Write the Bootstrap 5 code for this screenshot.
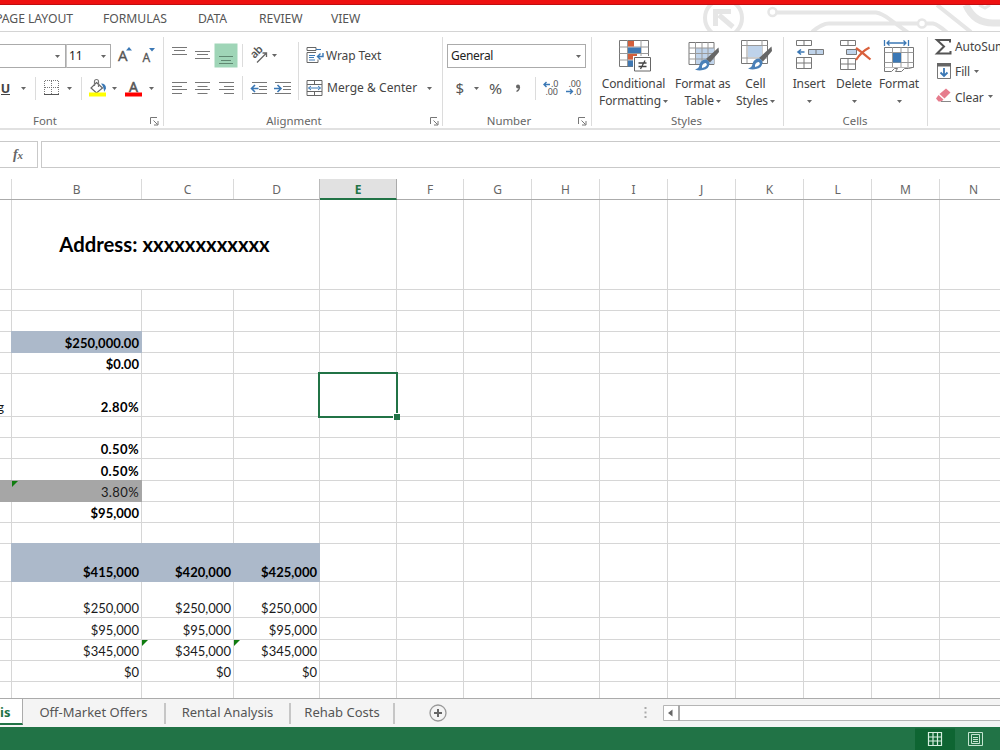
<!DOCTYPE html>
<html lang="en">
<head>
<meta charset="utf-8">
<meta name="viewport" content="width=device-width, initial-scale=1">
<title>Spreadsheet</title>
<link rel="stylesheet" href="https://cdn.jsdelivr.net/npm/bootstrap@5.3.0/dist/css/bootstrap.min.css">
<style>
  body { width: 1000px; height: 750px; overflow: hidden; background: #fff; color: #444;
    font-family: "Noto Sans", "Open Sans", sans-serif; font-size: 12px; line-height: 16px; letter-spacing: -.1px; }
  svg { display: block; flex: none; }
  svg text { font-family: "Noto Sans", sans-serif; }
  button { font: inherit; letter-spacing: inherit; color: inherit; background: none; border: 0; padding: 0; display: block; flex: none; }
  .topline { height: 5px; background: #ee1111; border-bottom: 1px solid #c00d10; }
  .menubar { height: 27px; border-bottom: 1px solid #d4d4d4; font-size: 12.2px; }
  .menubar svg { left: 680px; top: 0; }
  .menubar a { color: #555; text-decoration: none; display: block; line-height: 27px; white-space: nowrap; letter-spacing: -.05px; }
  .m-page { width: 103px; } .m-page span { display: flex; width: 73px; justify-content: flex-end; }
  .m-form { width: 95px; } .m-data { width: 61px; } .m-rev { width: 72px; }
  .ribbon { height: 98px; border-bottom: 2px solid #e1e1e1; }
  .grp { padding-top: 8px; position: relative; flex: none; }
  .grp::after { content: ""; position: absolute; right: 0; top: 5px; height: 89px; width: 1px; background: #dcdcdc; }
  .grp-label { height: 17px; margin-top: 8px; font-size: 11.4px; line-height: 17px; color: #666; letter-spacing: 0; }
  .line { height: 32px; display: flex; align-items: center; }
  .tall { height: 64px; display: flex; }
  .g-font { width: 164px; } .g-align { width: 279px; } .g-num { width: 149px; } .g-styles { width: 192px; } .g-cells { width: 144px; } .g-edit { width: 72px; padding-top: 3px; }
  .g-font .grp-label span { width: 90px; margin-right: 60px; }
  .g-align .grp-label span { width: 260px; margin-right: 6px; }
  .g-num .grp-label span { width: 132px; margin-right: 3px; }
  .g-styles .grp-label { padding-right: 3px; } .g-cells .grp-label { padding-right: 2px; }
  .g-edit::after { display: none; }
  .combo { height: 24px; border: 1px solid #ababab; color: #222; line-height: 22px; flex: none; display: flex; justify-content: space-between; align-items: center; }
  .c-face { width: 66px; border-left: 0; } .c-size { width: 45px; border-left-color: #c8c8c8; padding-left: 2px; } .c-fmt { width: 139px; margin-left: 4px; padding-left: 3px; letter-spacing: -.3px; }
  .t-wrap { width: 116px; text-align: left; } .t-merge { width: 97px; text-align: left; letter-spacing: .05px; }
  .big { text-align: center; line-height: 17px; }
  .big .cap { display: block; white-space: nowrap; padding-top: 3px; }
  .big svg.dd { display: inline-block; vertical-align: 2px; margin-left: 2px; }
  .g-cells svg.dd { margin-left: 0; }
  .ed { height: 24.500px; }
  .fx-row { padding: 11px 0; }
  .fx { height: 27px; border: 1px solid #c9c9c9; background: #fff; }
  .fx-name { width: 38px; border-left: 0; }
  .fx-in { border-right: 0; margin-left: 3px; }
  .heads { height: 21px; border-bottom: 1px solid #ababab; color: #666; }
  .heads div { flex: none; text-align: center; line-height: 21px; border-right: 1px solid #dadada; }
  .heads .on { background: #e1e1e1; color: #217346; font-weight: 700; box-shadow: -1px 0 #bbb; border-right-color: #aaa; border-bottom: 2px solid #217346; height: 21px; position: relative; }
  .wa{width:12px}.wb{width:130px}.wc{width:92px}.wd{width:86px}.we{width:77px}.wf{width:67px}.wg{width:68px}
  .sheet { height: 498px; overflow: hidden; }
  .cells { table-layout: fixed; width: 1007px; border-collapse: separate; border-spacing: 0; font-family: Lato, sans-serif; font-size: 13px; letter-spacing: .02px; line-height: 17px; color: #1a1a1a; }
  .cells td { padding: 0 2px 0 0; border-right: 1px solid #d6d6d6; border-bottom: 1px solid #d6d6d6; vertical-align: bottom; text-align: right; white-space: nowrap; position: relative; }
  .cells td.bd { font-weight: 700; color: #000; }
  .cells td.pct { letter-spacing: .4px; }
  .cells td.blue, .cells td.gray { --f: #acb9ca; background: var(--f); border-color: var(--f); box-shadow: -1px -1px var(--f), -1px 0 var(--f), 0 -1px var(--f); }
  .cells td.gray { --f: #a6a6a6; }
  .cells td.ttl { text-align: center; vertical-align: middle; font-size: 20.300px; font-weight: 700; color: #000; padding-bottom: 1px; }
  .cells td.cut { padding-right: 7px; }
  .cells td.cut span { display: flex; justify-content: flex-end; }
  .cells td.flag::before { content: ""; position: absolute; left: 0; top: 0; border-top: 6px solid #107c10; border-right: 6px solid transparent; }
  .cells td.active { z-index: 1; }
  .cells td.active::before { content: ""; position: absolute; inset: -2px; border: 2px solid #217346; }
  .cells td.active::after { content: ""; position: absolute; right: -4px; bottom: -4px; width: 7px; height: 7px; background: #217346; border: solid #fff; border-width: 1px 0 0 1px; }
  .tabsbar { height: 29px; background: #f4f4f4; border-top: 1px solid #ababab; color: #555; font-size: 13px; letter-spacing: 0; }
  .tab-on { width: 23px; height: 26px; background: #fff; border-right: 1px solid #ababab; border-bottom: 2px solid #217346; color: #217346; font-weight: 700; line-height: 27px; }
  .tab-x { height: 21px; line-height: 19px; margin-top: 4px; border-right: 2px solid #c6c6c6; text-align: center; white-space: nowrap; }
  .x1 { width: 143px; } .x2 { width: 125px; } .x3 { width: 104px; }
  .status { height: 23px; background: #217346; }
</style>
</head>
<body>
<svg width="0" height="0" class="position-absolute">
  <defs>
    <symbol id="dd" viewBox="0 0 5 3"><path d="M0 0h5L2.5 3z" fill="#666"/></symbol>
    <symbol id="launch" viewBox="0 0 9 9"><path d="M.5 7V.5H7M3.5 3.5l4 4M8 4v4H4" fill="none" stroke="#777"/></symbol>
    <symbol id="brush" viewBox="0 0 24 25"><path d="M23.500 0.500 L24 5 L15 15.500 L11 12z" fill="#666"/><path d="M10.500 12.500 Q14 13 14.500 16.500 Q14 22 8 23 Q4 24 0 22.500 Q4 21.500 4.500 18 Q5.500 13 10.500 12.500z" fill="#4a80b8"/><path d="M7 19q1-3 4-3l1 2q-2 3-5 3z" fill="#fff"/></symbol>
  </defs>
</svg>

<div class="topline"></div>
<nav class="menubar d-flex position-relative">
  <svg class="position-absolute" width="320" height="26" viewBox="680 5 320 26" fill="none" stroke="#e6e6e6">
    <circle cx="723.500" cy="18" r="18.500" stroke-width="4"/>
    <path d="M733 27L719 15M715.500 26V11.500H731" stroke-width="5"/>
    <circle cx="772.500" cy="12" r="4" stroke-width="2.500"/>
    <path d="M777 12.500h99q6 1 14 7l18 13M812 32q10-8.500 17-8.500h88M927 23.500h6q5 1 14 9M937 5l34 27" stroke-width="4"/>
    <circle cx="922" cy="23.500" r="4" stroke-width="2.500"/>
    <path d="M966 5q8 18 27 18h10" stroke-width="7"/><path d="M979 5l6 3 5-3" stroke-width="3"/>
  </svg>
  <a class="m-page" href="#"><span>PAGE LAYOUT</span></a><a class="m-form" href="#">FORMULAS</a><a class="m-data" href="#">DATA</a><a class="m-rev" href="#">REVIEW</a><a href="#">VIEW</a>
</nav>

<div class="ribbon d-flex">
  <section class="grp g-font">
    <div class="line">
      <div class="combo c-face"><span></span><svg width="10" height="3"><use href="#dd" width="5" height="3"/></svg></div>
      <div class="combo c-size"><span>11</span><svg width="9" height="3"><use href="#dd" width="5" height="3"/></svg></div>
      <button><svg width="27" height="32" viewBox="111 40 27 32"><text x="118" y="61" font-size="15" fill="#555" stroke="#555" stroke-width=".3">A</text><path d="M126 50.500l3-3.500 3 3.500z" fill="#3b78b5"/></svg></button>
      <button><svg width="25" height="32" viewBox="138 40 25 32"><text x="142.500" y="61.500" font-size="12" fill="#555" stroke="#555" stroke-width=".3">A</text><path d="M149 48h6l-3 3.500z" fill="#3b78b5"/></svg></button>
    </div>
    <div class="line">
      <button><svg width="36" height="32" viewBox="0 72 36 32"><text x="0.800" y="92.500" font-size="12.500" font-weight="700" fill="#444">U</text><path d="M1 94.500h9" stroke="#444"/><use href="#dd" x="21" y="87" width="5" height="3"/><path d="M35.500 77v23" stroke="#dcdcdc"/></svg></button>
      <button><svg width="46" height="32" viewBox="36 72 46 32" fill="none"><path d="M44.500 81v13M51.500 81v13M58.500 81v13M45 80.500h14M45 87.500h14" stroke="#777" stroke-dasharray="1 1"/><path d="M44 94.500h15" stroke="#555"/><use href="#dd" x="67" y="87" width="5" height="3"/><path d="M81.500 77v23" stroke="#dcdcdc"/></svg></button>
      <button><svg width="38" height="32" viewBox="82 72 38 32" fill="none"><path d="M96.500 82.500l6 5.500-6 5-5.500-5z" fill="#fff" stroke="#666" stroke-width="1.200"/><path d="M94.500 86v-4.500q0-2 2-2t2 2V87" stroke="#777" stroke-width="1.200"/><path d="M101 83.500q5 0 5 5l-2 3.500q0-5-3-8.500z" fill="#3b78b5"/><path d="M89 92.500h17v4H89z" fill="#ffff00"/><use href="#dd" x="112" y="87" width="5" height="3"/></svg></button>
      <button><svg width="40" height="32" viewBox="120 72 40 32"><text x="129" y="92" font-size="14" fill="#555" stroke="#555" stroke-width=".5">A</text><path d="M125 92.500h17v4h-17z" fill="#f00"/><use href="#dd" x="149" y="87" width="5" height="3"/></svg></button>
    </div>
    <div class="grp-label d-flex"><span class="text-center">Font</span><svg class="mt-1" width="13" height="13"><use href="#launch" y="1" width="9" height="9"/></svg></div>
  </section>

  <section class="grp g-align">
    <div class="line">
      <button><svg width="27" height="32" viewBox="164 40 27 32"><path d="M172 47.500h15M174 50.500h11M172 54.500h15" stroke="#777"/></svg></button>
      <button><svg width="23" height="32" viewBox="191 40 23 32"><path d="M195 51.500h15M197 54.500h11M195 58.500h15" stroke="#777"/></svg></button>
      <button><svg width="29" height="32" viewBox="214 40 29 32"><path d="M214.500 43.500h23v24h-23z" fill="#9fd5b7"/><path d="M219 56.500h14M221 60.500h10M219 63.500h14" stroke="#5f8871"/><path d="M242.500 44v23" stroke="#dcdcdc"/></svg></button>
      <button><svg width="56" height="32" viewBox="243 40 56 32" fill="none"><text transform="translate(254.500 59) rotate(-45)" font-size="11" font-weight="600" letter-spacing="-.5" fill="#555">ab</text><path d="M257 62.500l9-9M262.500 53h4v4" stroke="#666" stroke-width="1.300"/><use href="#dd" x="272" y="54" width="5" height="3"/><path d="M298.500 42v30" stroke="#dcdcdc"/></svg></button>
      <button class="d-flex align-items-center"><svg width="27" height="32" viewBox="299 40 27 32" fill="none"><path d="M307 47.500h9v3h-9z" stroke="#666"/><path d="M316 49.500h5" stroke="#3b78b5"/><path d="M316 52.500h-9v10h11v-3" stroke="#666"/><path d="M309 55.500h6M309 57.500h5M309 60h6" stroke="#3b78b5"/><path d="M323 53v3.500h-5M320.500 53.500l-3 3 3 3" stroke="#3b78b5" stroke-width="1.400"/></svg><span class="t-wrap">Wrap Text</span></button>
    </div>
    <div class="line">
      <button><svg width="27" height="32" viewBox="164 72 27 32"><path d="M172 82.500h15M172 86.500h10M172 89.500h15M172 93.500h10" stroke="#777"/></svg></button>
      <button><svg width="23" height="32" viewBox="191 72 23 32"><path d="M195 82.500h15M197.500 86.500h10M195 89.500h15M197.500 93.500h10" stroke="#777"/></svg></button>
      <button><svg width="29" height="32" viewBox="214 72 29 32"><path d="M219 82.500h15M224 86.500h10M219 89.500h15M224 93.500h10" stroke="#777"/><path d="M242.500 76v24" stroke="#dcdcdc"/></svg></button>
      <button><svg width="28" height="32" viewBox="243 72 28 32" fill="none"><path d="M252 82.500h15M259 86.500h8M259 89.500h8M252 93.500h15" stroke="#777"/><path d="M251.500 88.500h7M255 85l-3.500 3.500L255 92" stroke="#3b78b5" stroke-width="1.600"/></svg></button>
      <button><svg width="28" height="32" viewBox="271 72 28 32" fill="none"><path d="M275 82.500h16M283 86.500h8M283 89.500h8M275 93.500h16" stroke="#777"/><path d="M274 88.500h7M277.500 85l3.500 3.500-3.500 3.500" stroke="#3b78b5" stroke-width="1.600"/><path d="M298.500 72v28" stroke="#dcdcdc"/></svg></button>
      <button class="d-flex align-items-center"><svg width="28" height="32" viewBox="299 72 28 32" fill="none"><path d="M307 80.500h15v15h-15zM307 84.500h15M307 91.500h15M314.500 80.500v4M314.500 91.500v4" stroke="#666"/><path d="M308.500 88h12M311 86l-2.500 2 2.500 2M318 86l2.500 2-2.500 2" stroke="#3b78b5"/></svg><span class="t-merge">Merge &amp; Center</span><svg width="13" height="3"><use href="#dd" x="3" width="5" height="3"/></svg></button>
    </div>
    <div class="grp-label d-flex"><span class="text-center">Alignment</span><svg class="mt-1" width="13" height="13"><use href="#launch" y="1" width="9" height="9"/></svg></div>
  </section>

  <section class="grp g-num">
    <div class="line"><div class="combo c-fmt"><span>General</span><svg width="10" height="3"><use href="#dd" x="1" width="5" height="3"/></svg></div></div>
    <div class="line">
      <button><svg width="39" height="32" viewBox="443 72 39 32" fill="#555"><text x="455.500" y="93.500" font-size="15">$</text><use href="#dd" x="474" y="87" width="5" height="3"/></svg></button>
      <button><svg width="26" height="32" viewBox="482 72 26 32" fill="#555"><text x="489" y="93.500" font-size="15" textLength="13" lengthAdjust="spacingAndGlyphs">%</text></svg></button>
      <button><svg width="28" height="32" viewBox="508 72 28 32"><circle cx="518" cy="86.500" r="2" fill="#666"/><path d="M519.500 87q0 3-3 4.500" stroke="#666" stroke-width="1.300" fill="none"/><path d="M535.500 77v23" stroke="#dcdcdc"/></svg></button>
      <button><svg width="26" height="32" viewBox="536 72 26 32" fill="#555" font-size="9"><text x="551" y="87">.0</text><text x="545.500" y="95">.00</text><path d="M544 84.500h6M546.500 82l-2.500 2.500 2.500 2.500" stroke="#3b78b5" stroke-width="1.400" fill="none"/></svg></button>
      <button><svg width="26" height="32" viewBox="562 72 26 32" fill="#555" font-size="9"><text x="568.500" y="87">.00</text><text x="574" y="95">.0</text><path d="M566 91.500h6.500M570 89l2.500 2.500-2.500 2.500" stroke="#3b78b5" stroke-width="1.400" fill="none"/></svg></button>
    </div>
    <div class="grp-label d-flex"><span class="text-center">Number</span><svg class="mt-1" width="13" height="13"><use href="#launch" y="1" width="9" height="9"/></svg></div>
  </section>

  <section class="grp g-styles">
    <div class="tall">
      <button class="big"><svg width="83" height="32" viewBox="592 40 83 32" fill="none">
        <path d="M619.500 40.500h29v26h-29z" fill="#fff" stroke="#777"/><path d="M619.500 47h29M619.500 53.500h29M619.500 60h29M627.500 40v26M641 40v26" stroke="#999"/><path d="M628 41h6v5.500h-6z" fill="#d35f3c"/><path d="M628 47.500h13v5.500h-13z" fill="#3f78b3"/><path d="M628 54h9v5.500h-9z" fill="#d35f3c"/><path d="M628 60.500h5v6h-5z" fill="#3f78b3"/><path d="M633 56h19v16h-19z" fill="#fff"/><path d="M634.500 57.500h16v13.500h-16z" fill="#fff" stroke="#666"/><path d="M638.500 63h8M638.500 66.500h8M645 60.500l-4.500 8.500" stroke="#444" stroke-width="1.300"/></svg><span class="cap">Conditional<br>Formatting<svg class="dd" width="5" height="3"><use href="#dd" width="5" height="3"/></svg></span></button>
      <button class="big"><svg width="54" height="32" viewBox="675 40 54 32" fill="none"><path d="M689 42.500h25v22h-25z" fill="#fff" stroke="#777"/><path d="M695.500 48h18.500v16h-18.500z" fill="#bfd3ea"/><path d="M689 48h25M689 53.500h25M689 59h25M695.500 42v22M702 42v22M708 42v22" stroke="#999"/><use href="#brush" x="695" y="47" width="24" height="25"/></svg><span class="cap">Format as<br>Table<svg class="dd" width="5" height="3"><use href="#dd" width="5" height="3"/></svg></span></button>
      <button class="big"><svg width="54" height="32" viewBox="730 40 54 32" fill="none"><path d="M741.500 40.500h26v23h-26z" fill="#fff" stroke="#777"/><path d="M741.500 45.500h26M741.500 58h26M747 40v23M762 40v23" stroke="#999"/><path d="M748 46h14v11h-14z" fill="#bfd3ea"/><use href="#brush" x="748" y="46" width="24" height="25"/></svg><span class="cap" style="margin-left:-4px">Cell<br>Styles<svg class="dd" width="5" height="3"><use href="#dd" width="5" height="3"/></svg></span></button>
    </div>
    <div class="grp-label text-center">Styles</div>
  </section>

  <section class="grp g-cells">
    <div class="tall">
      <button class="big"><svg width="50" height="32" viewBox="784 40 50 32" fill="none"><path d="M796.500 40.500h15v5h-15zM804 40v5M796.500 57.500h15v11h-15zM804 57v11M796.500 63h15" stroke="#777"/><path d="M808.500 49.500h15v5h-15z" fill="#bfd3ea" stroke="#777"/><path d="M816 49v5" stroke="#777"/><path d="M798 52h6.500M801 49.500L798 52l3 2.500" stroke="#3b78b5" stroke-width="1.600"/></svg><span class="cap">Insert<br><svg class="dd" width="5" height="3"><use href="#dd" width="5" height="3"/></svg></span></button>
      <button class="big"><svg width="40" height="32" viewBox="834 40 40 32" fill="none"><path d="M840.500 40.500h15v5h-15zM848 40v5M840.500 58.500h15v11h-15zM848 58v11M840.500 64h15" stroke="#777"/><path d="M846.500 49.500h10v5h-10z" fill="#bfd3ea" stroke="#777"/><path d="M856 48q7 5 14.500 11.500M869.500 47.500q-8 4-13.500 12.500" stroke="#d9603c" stroke-width="2.200"/></svg><span class="cap">Delete<br><svg class="dd" width="5" height="3"><use href="#dd" width="5" height="3"/></svg></span></button>
      <button class="big"><svg width="50" height="32" viewBox="874 39 50 32" fill="none"><path d="M884.500 39v6M908.500 39v6M887 42h19M889.500 39.500L887 42l2.500 2.500M903.500 39.500L906 42l-2.500 2.500" stroke="#3b78b5" stroke-width="1.300"/><path d="M884.500 46.500h29v20h-29z" fill="#fff" stroke="#777"/><path d="M884.500 51.500h29M884.500 61.500h29M892.500 46v20M901 46v20M908 46v20" stroke="#999"/><path d="M893 52h8v9.500h-8z" fill="#3b78b5"/><path d="M884.500 66.500v4h7l3-3h3l-2 3h6l3-3h4l4-1" stroke="#777" fill="#fff"/></svg><span class="cap">Format<br><svg class="dd" width="5" height="3"><use href="#dd" width="5" height="3"/></svg></span></button>
    </div>
    <div class="grp-label text-center">Cells</div>
  </section>

  <section class="grp g-edit">
    <button class="ed d-flex align-items-center"><svg width="27" height="24" viewBox="928 35 27 24" fill="none"><path d="M950 42.500V40h-13l7 6.500-7 7h13.500V51" stroke="#555" stroke-width="2"/></svg>AutoSum</button>
    <button class="ed d-flex align-items-center"><svg width="27" height="24" viewBox="928 60 27 24" fill="none"><path d="M937.500 63.500h13v15h-13z" fill="#fff" stroke="#777"/><path d="M937 63h14v3.500h-14z" fill="#666"/><path d="M944 68v8M940.500 72.500l3.500 3.500 3.500-3.500" stroke="#3b78b5" stroke-width="1.800"/></svg>Fill<svg class="ms-1" width="5" height="3"><use href="#dd" width="5" height="3"/></svg></button>
    <button class="ed d-flex align-items-center"><svg width="27" height="24" viewBox="928 84 27 24"><path d="M946 88.500l4.500 4-6 6-5-4.500z" fill="#e67c8d"/><path d="M938.500 95l5 4.500-2 2h-3l-2.500-3z" fill="#e67c8d"/><path d="M941 101.500h10" stroke="#888"/></svg><span class="pt-1">Clear</span><svg class="ms-1" width="5" height="3"><use href="#dd" width="5" height="3"/></svg></button>
  </section>
</div>

<div class="fx-row d-flex">
  <div class="fx fx-name"><svg width="37" height="25" viewBox="0 142 37 25" fill="#666"><text x="13" y="159" font-size="14" font-style="italic" font-weight="700" style="font-family:'Liberation Serif',serif">f<tspan font-size="11">x</tspan></text></svg></div>
  <div class="fx fx-in flex-fill"></div>
</div>

<div class="heads d-flex"><div class="wa"></div><div class="wb">B</div><div class="wc">C</div><div class="wd">D</div><div class="we on">E</div><div class="wf">F</div><div class="wg">G</div><div class="wg">H</div><div class="wg">I</div><div class="wg">J</div><div class="wg">K</div><div class="wg">L</div><div class="wg">M</div><div class="wg">N</div></div>

<div class="sheet"><table class="cells"><colgroup><col class="wa"><col class="wb"><col class="wc"><col class="wd"><col class="we"><col class="wf"><col class="wg"><col class="wg"><col class="wg"><col class="wg"><col class="wg"><col class="wg"><col class="wg"><col class="wg"></colgroup><tbody id="rows"></tbody></table></div>

<div class="tabsbar d-flex">
  <div class="tab-on">is</div>
  <div class="tab-x x1">Off-Market Offers</div><div class="tab-x x2">Rental Analysis</div><div class="tab-x x3">Rehab Costs</div>
  <button><svg width="85" height="28" viewBox="395 699 85 28" fill="none"><circle cx="438" cy="713" r="8" stroke="#999" stroke-width="1.300"/><path d="M434 713h8M438 709v8" stroke="#666" stroke-width="2"/></svg></button>
  <svg class="ms-auto" width="357" height="28" viewBox="643 699 357 28"><path d="M644.500 707h2v2h-2zM644.500 711.500h2v2h-2zM644.500 716h2v2h-2z" fill="#aaa"/><path d="M663.500 705.500H1002v15H663.500z" fill="#fff" stroke="#b5b5b5"/><path d="M679 705v16" stroke="#aaa" stroke-width="2"/><path d="M672.500 709.500v7l-4.500-3.500z" fill="#666"/></svg>
</div>
<div class="status d-flex justify-content-end">
  <svg width="85" height="23" viewBox="915 727 85 23" fill="none"><path d="M915 728.500h40V750h-40z" fill="#0e6532"/><path d="M928.500 732.500h13v13h-13zM933 732v13M937.500 732v13M928 737h13M928 741h13" stroke="#d5efdf" stroke-width="1.200"/><path d="M968.500 732.500h14v13h-14z" stroke="#c5e5d1"/><path d="M971.500 734.500h8v9h-8z" stroke="#c5e5d1"/><path d="M973 737.500h5M973 739.500h5M973 741.500h5" stroke="#c5e5d1"/></svg>
</div>

<script src="https://cdn.jsdelivr.net/npm/bootstrap@5.3.0/dist/js/bootstrap.bundle.min.js"></script>
<script>
  // Each row: height, then { column index: [text, classes] }
  const sheet = [
    [90, {}], [21, {}], [21, {}],
    [21, {1: ['$250,000.00', 'bd blue']}],
    [21, {1: ['$0.00', 'bd']}],
    [43, {0: ['<span>g</span>', 'cut'], 1: ['2.80%', 'bd pct'], 4: ['', 'active']}],
    [21, {}],
    [21, {1: ['0.50%', 'bd pct']}],
    [22, {1: ['0.50%', 'bd pct']}],
    [21, {0: ['', 'gray'], 1: ['3.80%', 'pct gray flag']}],
    [21, {1: ['$95,000', 'bd']}],
    [21, {}],
    [38, {1: ['$415,000', 'bd blue'], 2: ['$420,000', 'bd blue'], 3: ['$425,000', 'bd blue']}],
    [36, {1: ['$250,000', ''], 2: ['$250,000', ''], 3: ['$250,000', '']}],
    [22, {1: ['$95,000', ''], 2: ['$95,000', ''], 3: ['$95,000', '']}],
    [21, {1: ['$345,000', ''], 2: ['$345,000', 'flag'], 3: ['$345,000', 'flag']}],
    [21, {1: ['$0', ''], 2: ['$0', ''], 3: ['$0', '']}],
    [21, {}]
  ];
  document.getElementById('rows').innerHTML = sheet.map(([h, cells], r) => {
    let html = '';
    for (let c = 0; c < 14; c++) {
      if (r === 0 && c === 1) { html += '<td colspan="3" class="ttl">Address: xxxxxxxxxxxx</td>'; c = 3; continue; }
      const [text, cls] = cells[c] || ['', ''];
      html += `<td class="${cls}">${text}</td>`;
    }
    return `<tr style="height:${h}px">${html}</tr>`;
  }).join('');
</script>
</body>
</html>
